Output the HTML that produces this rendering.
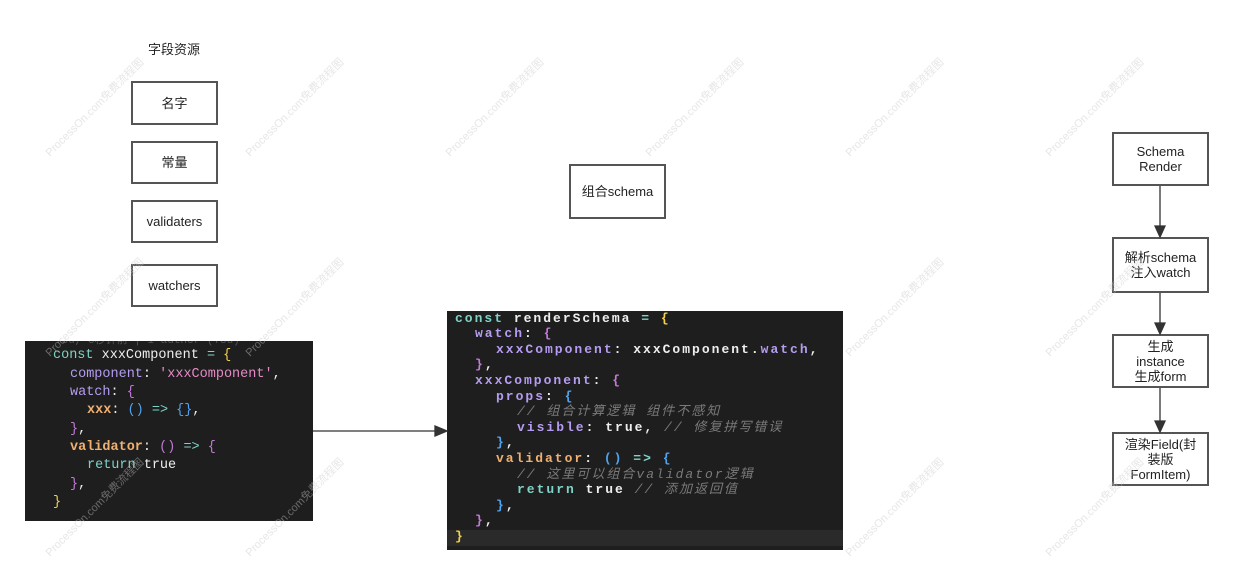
<!DOCTYPE html>
<html><head><meta charset="utf-8"><style>
body{margin:0;width:1234px;height:576px;background:#fff;position:relative;overflow:hidden;font-family:"Liberation Sans","Noto Sans CJK SC",sans-serif;}
.b{position:absolute;border:2px solid #555;box-sizing:border-box;display:flex;align-items:center;justify-content:center;text-align:center;font-size:13px;color:#222;line-height:15px;background:#fff}
.code{position:absolute;background:#1e1e1e;font-family:"Liberation Mono","Noto Sans CJK SC",monospace;font-size:13px;white-space:pre;color:#e6e6e6;overflow:hidden}
.code div{position:absolute;left:0;line-height:16px;height:16px}
.k{color:#7fd3c6}.p{color:#b59cf0}.o{color:#f0b070;font-weight:bold}.y{color:#f5d24a}.bl{color:#4fa3f0}.m{color:#c27ad8}.s{color:#e58ac6}.c{color:#7a7a7a;font-style:italic}.w{color:#eee}
svg{position:absolute;left:0;top:0}
</style></head><body>
<div style="position:absolute;left:148px;top:39px;font-size:13px;color:#222">字段资源</div>
<div class="b" style="left:131px;top:81px;width:87px;height:44px">名字</div>
<div class="b" style="left:131px;top:141px;width:87px;height:43px">常量</div>
<div class="b" style="left:131px;top:200px;width:87px;height:43px">validaters</div>
<div class="b" style="left:131px;top:264px;width:87px;height:43px">watchers</div>
<div class="b" style="left:569px;top:164px;width:97px;height:55px">组合schema</div>
<div class="b" style="left:1112px;top:132px;width:97px;height:54px">Schema<br>Render</div>
<div class="b" style="left:1112px;top:237px;width:97px;height:56px">解析schema<br>注入watch</div>
<div class="b" style="left:1112px;top:334px;width:97px;height:54px">生成<br>instance<br>生成form</div>
<div class="b" style="left:1112px;top:432px;width:97px;height:54px">渲染Field(封<br>装版<br>FormItem)</div>

<div class="code" style="left:25px;top:341px;width:288px;height:180px;font-size:13.5px">
<div style="top:-8px;left:30px;color:#555;font-size:11px">You, 8秒钟前 | 1 author (You)</div>
<div style="top:7px;left:28px"><span class="k">const</span> <span class="w">xxxComponent</span> <span class="k">=</span> <span class="y">{</span></div>
<div style="top:26px;left:45px"><span class="p">component</span><span class="w">:</span> <span class="s">'xxxComponent'</span><span class="w">,</span></div>
<div style="top:44px;left:45px"><span class="p">watch</span><span class="w">:</span> <span class="m">{</span></div>
<div style="top:62px;left:62px"><span class="o">xxx</span><span class="w">:</span> <span class="bl">()</span> <span class="k">=&gt;</span> <span class="bl">{}</span><span class="w">,</span></div>
<div style="top:81px;left:45px"><span class="m">}</span><span class="w">,</span></div>
<div style="top:99px;left:45px"><span class="o">validator</span><span class="w">:</span> <span class="m">()</span> <span class="k">=&gt;</span> <span class="m">{</span></div>
<div style="top:117px;left:62px"><span class="k">return</span> <span class="w">true</span></div>
<div style="top:136px;left:45px"><span class="m">}</span><span class="w">,</span></div>
<div style="top:154px;left:28px"><span class="y">}</span></div>
</div>

<div class="code" style="left:447px;top:311px;width:396px;height:239px;letter-spacing:2px;font-weight:bold">
<div style="top:219px;left:0;width:396px;height:16px;background:#2a2a2a"></div>
<div style="top:0px;left:8px"><span class="k">const</span> <span class="w">renderSchema</span> <span class="k">=</span> <span class="y">{</span></div>
<div style="top:15px;left:28px"><span class="p">watch</span><span class="w">:</span> <span class="m">{</span></div>
<div style="top:31px;left:49px"><span class="p">xxxComponent</span><span class="w">: xxxComponent.</span><span class="p">watch</span><span class="w">,</span></div>
<div style="top:46px;left:28px"><span class="m">}</span><span class="w">,</span></div>
<div style="top:62px;left:28px"><span class="p">xxxComponent</span><span class="w">:</span> <span class="m">{</span></div>
<div style="top:78px;left:49px"><span class="p">props</span><span class="w">:</span> <span class="bl">{</span></div>
<div style="top:93px;left:70px;font-weight:normal"><span class="c">// 组合计算逻辑 组件不感知</span></div>
<div style="top:109px;left:70px"><span class="p">visible</span><span class="w">: true,</span> <span class="c" style="font-weight:normal">// 修复拼写错误</span></div>
<div style="top:124px;left:49px"><span class="bl">}</span><span class="w">,</span></div>
<div style="top:140px;left:49px"><span class="o">validator</span><span class="w">:</span> <span class="bl">()</span> <span class="k">=&gt;</span> <span class="bl">{</span></div>
<div style="top:156px;left:70px;font-weight:normal"><span class="c">// 这里可以组合validator逻辑</span></div>
<div style="top:171px;left:70px"><span class="k">return</span> <span class="w">true</span> <span class="c" style="font-weight:normal">// 添加返回值</span></div>
<div style="top:187px;left:49px"><span class="bl">}</span><span class="w">,</span></div>
<div style="top:202px;left:28px"><span class="m">}</span><span class="w">,</span></div>
<div style="top:218px;left:8px"><span class="y">}</span></div>
</div>

<svg width="1234" height="576">
<g stroke="#333" stroke-width="1.3" fill="#333">
<line x1="313" y1="431" x2="437" y2="431"/><polygon points="447,431 435,426 435,436"/>
<line x1="1160" y1="186" x2="1160" y2="228"/><polygon points="1160,237 1155,226 1165,226"/>
<line x1="1160" y1="293" x2="1160" y2="325"/><polygon points="1160,334 1155,323 1165,323"/>
<line x1="1160" y1="388" x2="1160" y2="423"/><polygon points="1160,432 1155,421 1165,421"/>
</g>
<g font-size="11" fill="#c8c8c8" font-family="Liberation Sans, Noto Sans CJK SC, sans-serif" opacity="0.45">
<text transform="translate(50,157) rotate(-45)">ProcessOn.com免费流程图</text>
<text transform="translate(250,157) rotate(-45)">ProcessOn.com免费流程图</text>
<text transform="translate(450,157) rotate(-45)">ProcessOn.com免费流程图</text>
<text transform="translate(650,157) rotate(-45)">ProcessOn.com免费流程图</text>
<text transform="translate(850,157) rotate(-45)">ProcessOn.com免费流程图</text>
<text transform="translate(1050,157) rotate(-45)">ProcessOn.com免费流程图</text>
<text transform="translate(50,357) rotate(-45)">ProcessOn.com免费流程图</text>
<text transform="translate(250,357) rotate(-45)">ProcessOn.com免费流程图</text>
<text transform="translate(850,357) rotate(-45)">ProcessOn.com免费流程图</text>
<text transform="translate(1050,357) rotate(-45)">ProcessOn.com免费流程图</text>
<text transform="translate(850,557) rotate(-45)">ProcessOn.com免费流程图</text>
<text transform="translate(1050,557) rotate(-45)">ProcessOn.com免费流程图</text>
<text transform="translate(50,557) rotate(-45)">ProcessOn.com免费流程图</text>
<text transform="translate(250,557) rotate(-45)">ProcessOn.com免费流程图</text>
</g>
</svg>
</body></html>
